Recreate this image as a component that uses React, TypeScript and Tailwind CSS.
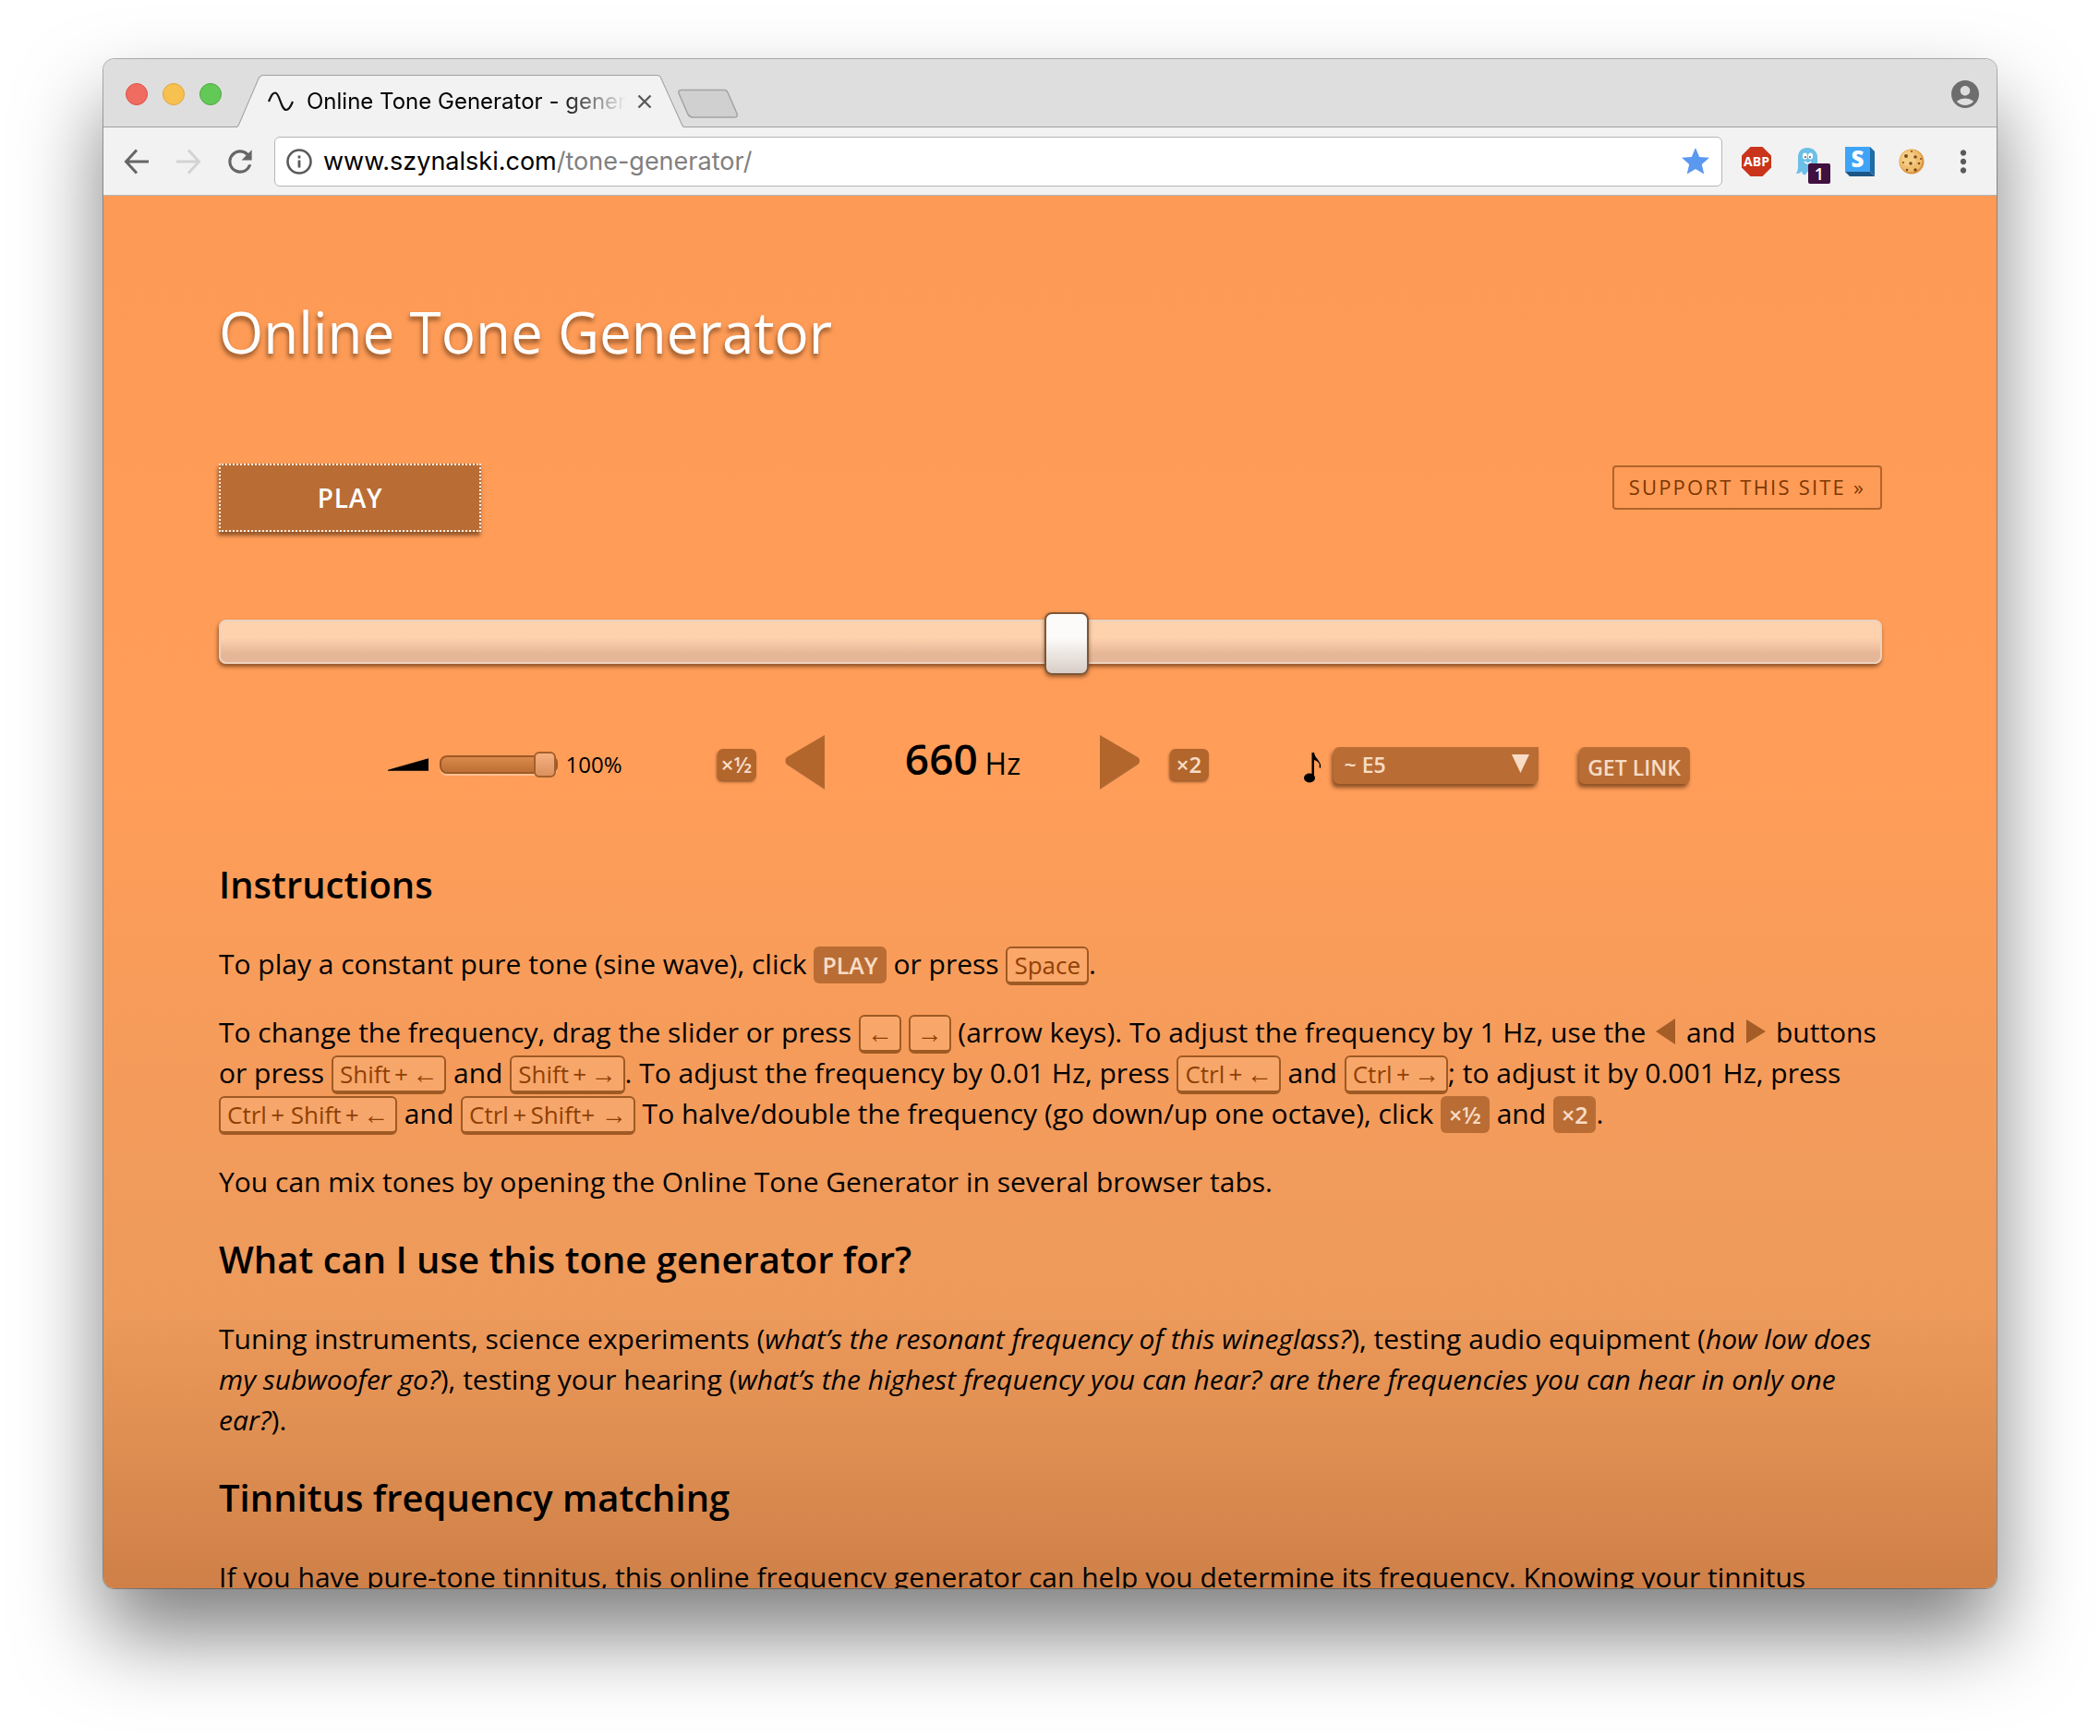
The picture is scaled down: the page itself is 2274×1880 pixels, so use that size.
import React from "react";
import { MdAccountCircle, MdMoreVert, MdRefresh, MdStar } from "react-icons/md";

function Key({ children }: { children: React.ReactNode }) {
  return (
    <kbd className="-mb-1 -mt-px inline-block h-[42px] whitespace-pre rounded-md border-2 border-b-4 border-[#9f5a24] bg-[#ffc896]/25 px-[7px] align-baseline font-['Open_Sans',sans-serif] text-[26px] leading-9 text-[#8f4005]">
      {children}
    </kbd>
  );
}

function Arrow({ dir }: { dir: "left" | "right" }) {
  return (
    <span className="font-['Liberation_Sans',sans-serif] text-[28px] font-bold leading-none">{dir === "left" ? "←" : "→"}</span>
  );
}

function Tag({ children }: { children: React.ReactNode }) {
  return (
    <span className="-my-px inline-block h-10 rounded-md bg-[#b96d34] px-[9px] align-baseline text-[25px] font-semibold leading-10 text-[#f8dcc6]">
      {children}
    </span>
  );
}

function SmallTriangle({ dir }: { dir: "left" | "right" }) {
  return (
    <svg viewBox="0 0 22 28" className="mx-[3px] -mb-0.5 inline-block h-7 w-[22px] align-baseline" aria-hidden="true">
      <path d={dir === "left" ? "M21 0V28L0 14z" : "M1 1V27L22 14z"} fill="#a45d26" />
    </svg>
  );
}

function StepButton({ dir }: { dir: "left" | "right" }) {
  return (
    <button type="button" aria-label={dir === "left" ? "Decrease frequency" : "Increase frequency"} className="shrink-0">
      <svg viewBox="0 0 46 66" className="block h-[66px] w-[46px]">
        <path
          d={dir === "left" ? "M44 3V61L3 34Q0 31 3 28z" : "M1 3V61L42 34Q46 31 42 28z"}
          fill="#8f5426"
          opacity="0.7"
        />
        <path
          d={dir === "left" ? "M44 2V59L3 32Q0 29 3 26z" : "M1 2V59L42 32Q46 29 42 26z"}
          fill="#b2662c"
        />
      </svg>
    </button>
  );
}

function TabStrip() {
  return (
    <div className="relative flex h-[74px] shrink-0 items-end border-b border-[#a0a0a0] bg-[#dedede] pl-6">
      <div className="flex h-full items-center gap-4 pt-0.5">
        <button type="button" aria-label="Close" className="size-6 rounded-full border border-[#dd5246] bg-[#f06b60]" />
        <button type="button" aria-label="Minimize" className="size-6 rounded-full border border-[#dfa53c] bg-[#f7c150]" />
        <button type="button" aria-label="Zoom" className="size-6 rounded-full border border-[#50a73f] bg-[#62c956]" />
      </div>
      <div className="relative -mb-px ml-4 flex h-[57px] w-[485px] items-center pl-[34px]">
        <svg viewBox="0 0 484 57" className="absolute inset-0 h-full w-full" preserveAspectRatio="none" aria-hidden="true">
          <path d="M0 57Q2 56 3 53L24 4Q26 .5 29 .5H454Q458 .5 459 4L481 53Q482 56 484 57z" fill="#f2f2f2" />
          <path d="M0 56.500Q2 56 3 53L24 4Q26 .5 29 .5H454Q458 .5 459 4L481 53Q482 56 484 56.500" fill="none" stroke="#a0a0a0" />
        </svg>
        <svg viewBox="0 0 28 22" className="relative h-[22px] w-7" aria-hidden="true">
          <path d="M1 11C4 4 5 1.500 8 1.500C13 1.500 14 20 20 20C23 20 25 16 27 11" fill="none" stroke="#111" strokeWidth="2.200" />
        </svg>
        <span className="relative ml-3.5 w-[350px] overflow-hidden whitespace-nowrap text-[24px] leading-8 text-black [mask-image:linear-gradient(90deg,#000_78%,transparent_99%)]">
          Online Tone Generator - genera
        </span>
        <button type="button" aria-label="Close tab" className="relative ml-2">
          <svg viewBox="0 0 16 16" className="size-4">
            <path d="M1.500 1.500L14.500 14.500M14.500 1.500L1.500 14.500" stroke="#5a5a5a" strokeWidth="2.400" />
          </svg>
        </button>
      </div>
      <button type="button" aria-label="New tab" className="-ml-2 mb-2">
        <svg viewBox="0 0 67 33" className="block h-[33px] w-[67px]">
          <path d="M5 1.500H51Q54 1.500 55 4L65 27Q66 31 63 31H18Q14 31 12 28L2 5Q1 1.500 5 1.500z" fill="#d0d0d0" stroke="#a3a3a3" strokeWidth="1.500" />
        </svg>
      </button>
      <button type="button" aria-label="Profile" className="mb-[17px] ml-auto mr-4">
        <MdAccountCircle className="size-9 text-[#6d6d6d]" />
      </button>
    </div>
  );
}

function Toolbar() {
  return (
    <div className="flex h-[74px] shrink-0 items-center border-b border-[#b5b5b5] bg-[#f2f2f2] pl-[22px] text-[#5f5f5f]">
      <button type="button" aria-label="Back">
        <svg viewBox="0 0 28 28" className="size-7">
          <path d="M14 1.500L2.500 14L14 26.500M2.500 14H27" fill="none" stroke="#666" strokeWidth="3" />
        </svg>
      </button>
      <button type="button" aria-label="Forward" className="ml-7">
        <svg viewBox="0 0 28 28" className="size-7">
          <path d="M14 1.500L25.500 14L14 26.500M25.500 14H1" fill="none" stroke="#d3d3d3" strokeWidth="3" />
        </svg>
      </button>
      <button type="button" aria-label="Reload" className="ml-[23px]">
        <MdRefresh className="size-[38px] text-[#666]" />
      </button>
      <div className="ml-[18px] flex h-[54px] min-w-0 flex-1 items-center rounded-md border border-[#b5b5b5] bg-white pl-3 pr-2.5">
        <svg viewBox="0 0 28 28" className="size-7 shrink-0" aria-hidden="true">
          <circle cx="14" cy="14" r="12.500" fill="none" stroke="#5a5a5a" strokeWidth="2.600" />
          <path d="M14 12.500V20.500M14 7.500V10.500" stroke="#5a5a5a" strokeWidth="2.800" />
        </svg>
        <div role="textbox" aria-label="Address" className="ml-3 min-w-0 flex-1 whitespace-nowrap text-[27px] leading-9 text-black">
          www.szynalski.com<span className="text-[#808080]">/tone-generator/</span>
        </div>
        <button type="button" aria-label="Bookmark">
          <MdStar className="size-9 text-[#5b98f0]" />
        </button>
      </div>
      <div className="ml-[21px] flex items-center">
        <button type="button" aria-label="Adblock Plus" className="relative flex size-8 items-center justify-center">
          <svg viewBox="0 0 32 32" className="absolute inset-0 size-8">
            <path d="M9.500 0H22.500L32 9.500V22.500L22.500 32H9.500L0 22.500V9.500z" fill="#c9341a" />
          </svg>
          <span className="relative font-['Open_Sans',sans-serif] text-[14px] font-bold leading-none text-white">ABP</span>
        </button>
        <button type="button" aria-label="Ghostery, 1 tracker" className="relative ml-[27px] h-8 w-9">
          <svg viewBox="0 0 24 30" className="absolute left-0 top-px h-[30px] w-6">
            <path d="M12 0C6 0 2 4 2 10V21C2 24 1 26 0 28C4 28 5 27 6 25C6 28 8 30 10 29C12 28 11 26 13 26C15 26 15 29 18 28C21 27 23 24 23 18V10C23 4 18 0 12 0z" fill="#6cbfe6" />
            <ellipse cx="9.500" cy="9" rx="2.600" ry="3.600" fill="#fff" />
            <ellipse cx="15.500" cy="9" rx="2.600" ry="3.600" fill="#fff" />
            <circle cx="10" cy="10" r="1" fill="#456" />
            <circle cx="15" cy="10" r="1" fill="#456" />
            <path d="M9 15Q13 19 16 15" fill="none" stroke="#fff" strokeWidth="1.500" />
          </svg>
          <span className="absolute left-[13px] top-[18px] h-[22px] w-6 rounded-xs bg-[#40103f] text-center font-['Open_Sans',sans-serif] text-[18px] font-semibold leading-[22px] text-white">
            1
          </span>
        </button>
        <button type="button" aria-label="S extension" className="relative ml-[17px] size-8">
          <svg viewBox="0 0 32 32" className="absolute inset-0 size-8">
            <path d="M27 0L32 5V32L27 27z" fill="#1f6ba5" />
            <path d="M0 27H27L32 32H5z" fill="#1d5585" />
            <path d="M0 0H27V27H0z" fill="#3fa4f7" />
          </svg>
          <span className="absolute left-0 top-0 w-[27px] text-center font-['Open_Sans',sans-serif] text-[24px] font-extrabold leading-[26px] text-white">S</span>
        </button>
        <button type="button" aria-label="Cookies" className="ml-[26px]">
          <svg viewBox="0 0 28 28" className="block size-7">
            <circle cx="14" cy="14" r="13.500" fill="#d9953f" />
            <circle cx="13" cy="13" r="12.300" fill="#f0bd6c" />
            <circle cx="11" cy="11" r="8" fill="#f6cd85" />
            <g fill="#7a4a20">
              <circle cx="8" cy="8" r="2" /><circle cx="18" cy="9" r="1.800" /><circle cx="13" cy="16" r="1.800" />
              <circle cx="22" cy="16" r="1.300" /><circle cx="5" cy="15" r="1" /><circle cx="18" cy="23" r="1.800" />
              <circle cx="9" cy="23" r="1.300" /><circle cx="14" cy="3" r="1" /><circle cx="24" cy="11" r="1" />
            </g>
          </svg>
        </button>
        <button type="button" aria-label="Menu" className="ml-[23px] mr-[17px]">
          <MdMoreVert className="size-[38px] text-[#5a5a5a]" />
        </button>
      </div>
    </div>
  );
}

function Controls() {
  const octave =
    "mt-0.5 h-[34px] w-[42px] shrink-0 rounded-md bg-[#b2662c] text-center text-[24px] font-semibold leading-[34px] text-[#f8dcc6] shadow-[-1px_2px_3px_rgba(80,40,10,0.6)]";
  return (
    <div className="mt-[75px] flex h-[66px] items-center justify-center gap-[103px] pr-[26px]">
      <div className="mt-0.5 flex w-64 items-center">
        <svg viewBox="0 0 46 14" className="ml-0.5 mr-3 h-[14px] w-[46px]" aria-hidden="true">
          <path d="M0 13L45 0V14H0z" fill="#000" />
        </svg>
        <input
          type="range"
          aria-label="Volume"
          defaultValue={100}
          className="h-7 w-[128px] appearance-none bg-transparent [&::-webkit-slider-runnable-track]:h-5 [&::-webkit-slider-runnable-track]:rounded-lg [&::-webkit-slider-runnable-track]:border-2 [&::-webkit-slider-runnable-track]:border-[#9f5a24] [&::-webkit-slider-runnable-track]:bg-linear-to-b [&::-webkit-slider-runnable-track]:from-[#d98a4b] [&::-webkit-slider-runnable-track]:to-[#bd6f35] [&::-webkit-slider-runnable-track]:shadow-[0_2px_0_#ffc093] [&::-webkit-slider-thumb]:-mr-0.5 [&::-webkit-slider-thumb]:-mt-1.5 [&::-webkit-slider-thumb]:h-7 [&::-webkit-slider-thumb]:w-6 [&::-webkit-slider-thumb]:appearance-none [&::-webkit-slider-thumb]:rounded-md [&::-webkit-slider-thumb]:border-2 [&::-webkit-slider-thumb]:border-[#a5602b] [&::-webkit-slider-thumb]:bg-linear-to-b [&::-webkit-slider-thumb]:from-[#f5b183] [&::-webkit-slider-thumb]:to-[#dc915c]"
        />
        <span className="ml-2 text-[24px] leading-8">100%</span>
      </div>
      <div className="flex w-[532px] items-center">
        <button type="button" className={octave}>×½</button>
        <div className="ml-[30px] flex flex-1 items-center justify-between">
          <StepButton dir="left" />
          <div className="pb-1.5 leading-[60px]">
            <span className="text-[46px] font-semibold">660</span> <span className="text-[32px]">Hz</span>
          </div>
          <StepButton dir="right" />
        </div>
        <button type="button" className={octave + " ml-[30px]"}>×2</button>
      </div>
      <div className="flex w-[420px] items-center">
        <svg viewBox="0 0 20 34" className="mr-3 mt-2 h-[34px] w-5" aria-hidden="true">
          <ellipse cx="6" cy="28.500" rx="6" ry="5" />
          <path d="M8.500 1H11C12 8 20 11 18 18L16.500 17C18 12 14 10 11 9V28H8.500z" />
        </svg>
        <div className="relative mt-1 h-10 w-[222px]">
          <select
            aria-label="Note"
            className="block h-10 w-full appearance-none rounded-md rounded-tr-none bg-[#b96d34] pb-0.5 pl-3 text-[23px] font-semibold leading-9 text-[#f8dcc6] shadow-[-2px_4px_4px_rgba(80,40,10,0.65)]"
          >
            <option>~ E5</option>
          </select>
          <svg viewBox="0 0 19 20" className="pointer-events-none absolute right-2.5 top-2 h-5 w-[19px]" aria-hidden="true">
            <path d="M0 0H19L9.500 20z" fill="#f8dcc6" />
          </svg>
        </div>
        <button
          type="button"
          className="ml-11 mt-1 h-10 w-[120px] rounded-md bg-[#b96d34] pb-1 text-[23px] font-semibold text-[#f8dcc6] shadow-[-2px_4px_4px_rgba(80,40,10,0.65)]"
        >
          GET LINK
        </button>
      </div>
    </div>
  );
}

export default function App() {
  const h2 = "mb-9 mt-[34px] text-[40px] font-semibold leading-[56px]";
  return (
    <div className="flex h-screen flex-col bg-white px-28 pb-40 pt-16">
      <div className="flex min-h-0 flex-1 flex-col overflow-hidden rounded-xl font-['Inter',sans-serif] shadow-[0_0_0_1px_rgba(0,0,0,0.3),0_50px_90px_rgba(0,0,0,0.5)]">
        <TabStrip />
        <Toolbar />
        <main className="min-h-0 flex-1 overflow-hidden bg-[linear-gradient(180deg,#fd9b56_0%,#ff9d59_42%,#f09b5c_72%,#ed9a5b_80%,#df8f52_89%,#cf8048_100%)] pl-[125px] pr-31 pt-[103px] font-['Open_Sans',sans-serif] text-[30px] leading-[44px] text-black">
          <h1 className="text-[62px] leading-[88px] text-white [text-shadow:-1px_4px_5px_rgba(90,50,20,0.7)]">Online Tone Generator</h1>
          <div className="mt-[99px] flex items-start justify-between">
            <button
              type="button"
              className="h-[74px] w-[284px] border-2 border-dotted border-white/90 bg-[#b96d34] text-[28px] font-semibold tracking-wide text-white shadow-[-1px_4px_4px_rgba(80,40,10,0.6)]"
            >
              PLAY
            </button>
            <a href="#support" className="mt-0.5 flex h-12 items-center rounded-sm border-2 border-[#b2642a] px-4 pb-0.5 text-[22px] tracking-widest text-[#7c3600]">
              SUPPORT THIS SITE »
            </a>
          </div>
          <input
            type="range"
            aria-label="Frequency"
            min={0}
            max={1000}
            defaultValue={510}
            className="mt-[95px] block h-12 w-full appearance-none bg-transparent [&::-webkit-slider-runnable-track]:h-12 [&::-webkit-slider-runnable-track]:rounded-lg [&::-webkit-slider-runnable-track]:border-2 [&::-webkit-slider-runnable-track]:border-[#ecd2bf] [&::-webkit-slider-runnable-track]:bg-[linear-gradient(180deg,#ffd2ae_0%,#ffd2ae_40%,#e5b798_80%,#e5b798_100%)] [&::-webkit-slider-runnable-track]:shadow-[-1px_3px_4px_rgba(80,40,10,0.65)] [&::-webkit-slider-thumb]:-mt-2.5 [&::-webkit-slider-thumb]:h-[68px] [&::-webkit-slider-thumb]:w-12 [&::-webkit-slider-thumb]:appearance-none [&::-webkit-slider-thumb]:rounded-lg [&::-webkit-slider-thumb]:border-2 [&::-webkit-slider-thumb]:border-[#7d5738] [&::-webkit-slider-thumb]:bg-[linear-gradient(180deg,#fcfbf9_0%,#fcfbf9_40%,#d8cdc6_100%)] [&::-webkit-slider-thumb]:shadow-[0_2px_4px_rgba(80,40,10,0.6)]"
          />
          <Controls />
          <h2 className={h2 + " pt-9"}>Instructions</h2>
          <p>
            To play a constant pure tone (sine wave), click <Tag>PLAY</Tag> or press <Key>Space</Key>.
          </p>
          <p className="mt-[30px]">
            To change the frequency, drag the slider or press <Key><Arrow dir="left" /></Key> <Key><Arrow dir="right" /></Key> (arrow keys). To adjust the
            frequency by 1 Hz, use the <SmallTriangle dir="left" /> and <SmallTriangle dir="right" /> buttons or press{" "}
            <Key>Shift&#8201;+&#8201;<Arrow dir="left" /></Key> and <Key>Shift&#8201;+&#8201;<Arrow dir="right" /></Key>. To adjust the frequency by 0.01 Hz, press{" "}
            <Key>Ctrl&#8201;+&#8201;<Arrow dir="left" /></Key> and <Key>Ctrl&#8201;+&#8201;<Arrow dir="right" /></Key>; to adjust it by 0.001 Hz, press{" "}
            <Key>Ctrl&#8201;+ Shift&#8201;+&#8201;<Arrow dir="left" /></Key> and <Key>Ctrl&#8201;+&#8201;Shift+ <Arrow dir="right" /></Key> To halve/double the frequency (go
            down/up one octave), click <Tag>×½</Tag> and <Tag>×2</Tag>.
          </p>
          <p className="mt-[30px]">You can mix tones by opening the Online Tone Generator in several browser tabs.</p>
          <h2 className={h2}>What can I use this tone generator for?</h2>
          <p>
            Tuning instruments, science experiments (<em>what’s the resonant frequency of this wineglass?</em>), testing audio equipment (
            <em>how low does my subwoofer go?</em>), testing your hearing (
            <em>what’s the highest frequency you can hear? are there frequencies you can hear in only one ear?</em>).
          </p>
          <h2 className={h2}>Tinnitus frequency matching</h2>
          <p>
            If you have pure-tone tinnitus, this online frequency generator can help you determine its frequency. Knowing your tinnitus
          </p>
        </main>
      </div>
    </div>
  );
}
